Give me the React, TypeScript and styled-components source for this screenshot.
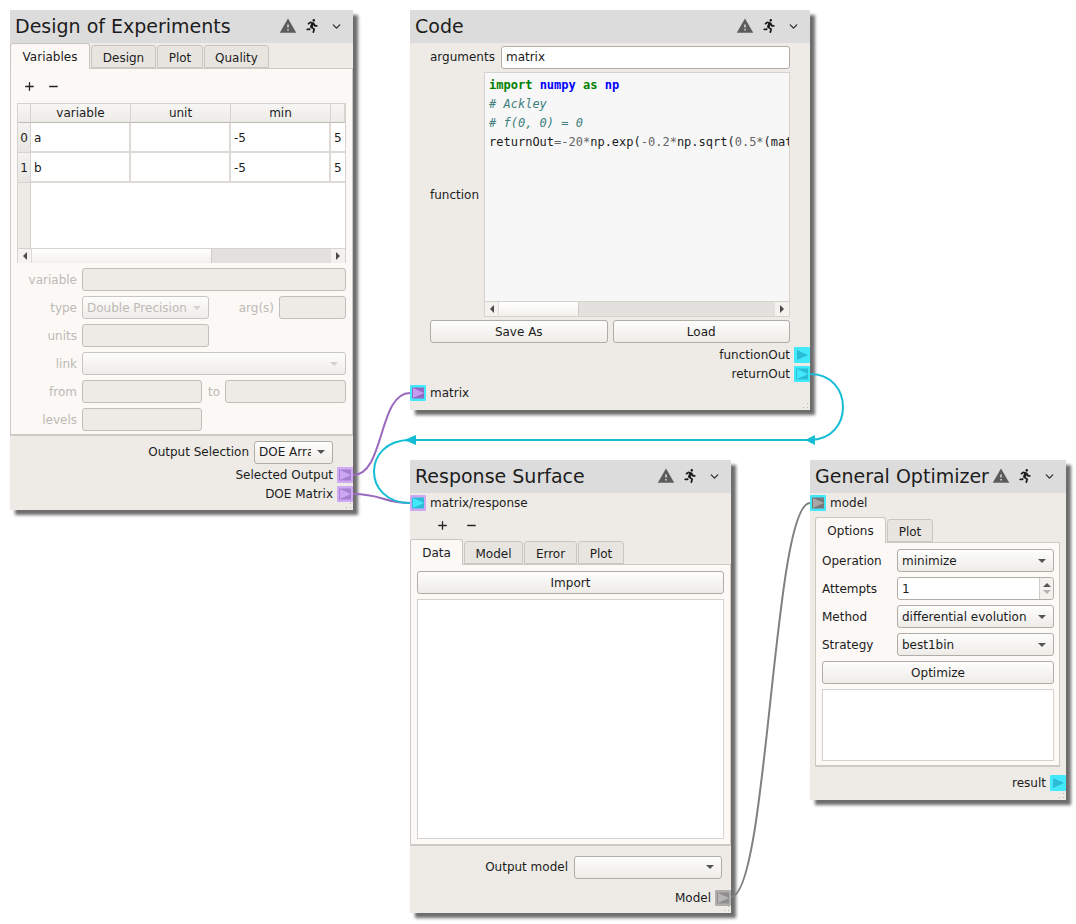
import React from "react";
import styled, { createGlobalStyle } from "styled-components";
import { FiChevronDown, FiPlus, FiMinus } from "react-icons/fi";
import { FaRunning } from "react-icons/fa";
import { MdWarning } from "react-icons/md";

const GlobalStyle = createGlobalStyle`
  html, body {
    margin: 0;
    padding: 0;
    background: #ffffff;
  }
  body {
    font-family: "DejaVu Sans", sans-serif;
    font-size: 12px;
    color: #1c1c1c;
  }
`;

const Canvas = styled.div`
  position: relative;
  width: 1076px;
  height: 924px;
  overflow: hidden;
`;

const Wires = styled.svg`
  position: absolute;
  inset: 0;
  z-index: 2;
  pointer-events: none;
`;

const Node = styled.section<{ $x: number; $y: number; $w: number; $h: number }>`
  position: absolute;
  left: ${(p) => p.$x}px;
  top: ${(p) => p.$y}px;
  width: ${(p) => p.$w}px;
  height: ${(p) => p.$h}px;
  display: flex;
  flex-direction: column;
  background: #eeebe7;
  box-shadow: 5px 5px 3px rgba(30, 30, 30, 0.65);
`;

const Header = styled.header`
  box-sizing: border-box;
  flex: 0 0 33px;
  display: flex;
  align-items: center;
  padding: 0 10px 1px 5px;
  background: #dcdcdc;
`;

const Title = styled.h1`
  flex: 1;
  margin: 0;
  font-size: 19px;
  font-weight: 400;
  white-space: nowrap;
`;

const HeaderIcons = styled.div`
  display: flex;
  align-items: center;
  gap: 10px;
  color: #5c5c5c;

  svg:nth-child(1) {
    margin-right: -2px;
  }
  svg:nth-child(2) {
    margin-right: 1px;
    color: #1c1c1c;
  }
  svg:nth-child(3) {
    color: #333333;
  }
`;

const Grip = styled.svg`
  position: absolute;
  right: 1px;
  bottom: 1px;
`;

const TabBar = styled.div<{ $inset?: number }>`
  flex: 0 0 25px;
  display: flex;
  align-items: flex-end;
  gap: 1px;
  margin-left: ${(p) => p.$inset ?? 0}px;
  position: relative;
  z-index: 1;
`;

const Tab = styled.div<{ $w: number; $active?: boolean }>`
  box-sizing: border-box;
  width: ${(p) => p.$w}px;
  height: ${(p) => (p.$active ? 26 : 23)}px;
  margin-bottom: ${(p) => (p.$active ? -1 : 0)}px;
  padding-top: ${(p) => (p.$active ? 6 : 5)}px;
  text-align: center;
  background: ${(p) => (p.$active ? "#fbf8f5" : "#e8e5e1")};
  border: 1px solid #c9c5c0;
  border-bottom: ${(p) => (p.$active ? "none" : "1px solid #c9c5c0")};
  border-radius: 3px 3px 0 0;
`;

const Pane = styled.div<{ $h: number; $margin?: string; $pad?: string }>`
  box-sizing: border-box;
  flex: 0 0 ${(p) => p.$h}px;
  margin: ${(p) => p.$margin ?? "0"};
  padding: ${(p) => p.$pad ?? "0"};
  background: #fbf8f5;
  border: 1px solid #cdc9c4;
  border-bottom-width: 2px;
  display: flex;
  flex-direction: column;
`;

const ToolRow = styled.div<{ $pad: number; $h: number; $gap: number }>`
  flex: 0 0 ${(p) => p.$h}px;
  display: flex;
  align-items: center;
  gap: ${(p) => p.$gap}px;
  padding-left: ${(p) => p.$pad}px;
  color: #262626;
`;

const VarTable = styled.div`
  box-sizing: border-box;
  width: 329px;
  height: 160px;
  display: grid;
  grid-template-columns: 13px 100px 100px 100px 1fr;
  grid-template-rows: 19px 30px 30px 1fr 14px;
  background: #ffffff;
  border: 1px solid #d6d3ce;
`;

const HeadCell = styled.div`
  display: flex;
  align-items: center;
  justify-content: center;
  background: linear-gradient(#f7f6f4, #ecebe7);
  border-right: 1px solid #d6d3ce;
  border-bottom: 1px solid #bdb9b4;
`;

const RowHead = styled(HeadCell)`
  padding-top: 1px;
  border-bottom: 1px solid #d6d3ce;
  background: linear-gradient(#f4f2f0, #e8e6e2);
`;

const Cell = styled.div<{ $last?: boolean }>`
  display: flex;
  align-items: center;
  padding: 2px 0 0 3px;
  overflow: hidden;
  background: #ffffff;
  border-right: ${(p) => (p.$last ? "none" : "2px solid #dedbd7")};
  border-bottom: 2px solid #dedbd7;
`;

const EmptyGutter = styled.div`
  background: #eeebe7;
  border-right: 1px solid #d6d3ce;
`;

const EmptyBody = styled.div`
  grid-column: 2 / 6;
`;

const ScrollBar = styled.div<{ $thumb: number }>`
  display: grid;
  grid-template-columns: 13px ${(p) => p.$thumb}px 1fr 14px;
  height: 14px;
  background: #e3e1dd;
  border-top: 1px solid #d6d3ce;
`;

const ScrollArrow = styled.div<{ $dir: "left" | "right" }>`
  display: flex;
  align-items: center;
  justify-content: center;
  background: #f4f2ef;

  &::before {
    content: "";
    border-top: 4px solid transparent;
    border-bottom: 4px solid transparent;
    ${(p) => (p.$dir === "left" ? "border-right" : "border-left")}: 4px solid #4a4a4a;
  }
`;

const ScrollThumb = styled.div`
  background: linear-gradient(#ffffff, #f2f0ed);
  border-right: 1px solid #cfccc7;
  border-left: 1px solid #e0ddd9;
`;

const ScrollTrough = styled.div``;

const TableScroll = styled(ScrollBar)`
  grid-column: 1 / 6;
`;

const FormRow = styled.div`
  flex: 0 0 23px;
  display: flex;
  align-items: center;
  margin-top: 5px;
`;

const FormLabel = styled.span<{ $w: number; $muted?: boolean }>`
  flex: 0 0 ${(p) => p.$w}px;
  text-align: right;
  margin-right: 5px;
  color: ${(p) => (p.$muted ? "#bdbab6" : "inherit")};
  white-space: nowrap;
`;

const Field = styled.div<{ $w?: number; $white?: boolean }>`
  box-sizing: border-box;
  ${(p) => (p.$w ? `flex: 0 0 ${p.$w}px;` : "flex: 1;")}
  height: 23px;
  display: flex;
  align-items: center;
  padding-left: 4px;
  background: ${(p) => (p.$white ? "#ffffff" : "#eeebe7")};
  border: 1px solid ${(p) => (p.$white ? "#b0aca6" : "#c2beb9")};
  border-radius: 3px;
`;

const Combo = styled.div<{ $w?: number; $off?: boolean }>`
  box-sizing: border-box;
  ${(p) => (p.$w ? `flex: 0 0 ${p.$w}px;` : "flex: 1;")}
  min-width: 0;
  height: 23px;
  display: flex;
  align-items: center;
  padding: 0 7px 0 4px;
  color: ${(p) => (p.$off ? "#bdbab6" : "inherit")};
  background: linear-gradient(#fdfdfc, #eeece8);
  border: 1px solid ${(p) => (p.$off ? "#c9c5c0" : "#b0aca6")};
  border-radius: 3px;

  &::after {
    content: "";
    flex: none;
    margin-left: auto;
    border-left: 4px solid transparent;
    border-right: 4px solid transparent;
    border-top: 4px solid ${(p) => (p.$off ? "#d4d1cd" : "#555555")};
  }
`;

const ComboText = styled.span`
  flex: 1;
  min-width: 0;
  margin-right: 6px;
  overflow: hidden;
  white-space: nowrap;
`;

const Spin = styled.div`
  flex: 0 0 13px;
  height: 100%;
  margin-left: auto;
  display: flex;
  flex-direction: column;
  align-items: center;
  justify-content: center;
  gap: 3px;
  background: #f3f1ee;
  border-left: 1px solid #d0cdc8;
  border-radius: 0 3px 3px 0;
`;

const SpinArrow = styled.span<{ $down?: boolean }>`
  border-left: 4px solid transparent;
  border-right: 4px solid transparent;
  ${(p) =>
    p.$down
      ? "border-top: 4px solid #b5b2ae;"
      : "border-bottom: 4px solid #555555;"}
`;

const Button = styled.div<{ $fixed?: boolean }>`
  box-sizing: border-box;
  flex: ${(p) => (p.$fixed ? "0 0 23px" : "1")};
  height: 23px;
  display: flex;
  align-items: center;
  justify-content: center;
  background: linear-gradient(#fdfdfc, #eeece8);
  border: 1px solid #b0aca6;
  border-radius: 3px;
`;

const BlankBox = styled.div<{ $h: number }>`
  box-sizing: border-box;
  flex: 0 0 ${(p) => p.$h}px;
  background: #ffffff;
  border: 1px solid #d6d3ce;
`;

const PortRow = styled.div<{ $out?: boolean }>`
  flex: 0 0 19px;
  display: flex;
  align-items: center;
  justify-content: ${(p) => (p.$out ? "flex-end" : "flex-start")};
  gap: 4px;
`;

const ActionRow = styled.div<{ $pad: string; $h: number; $end?: boolean; $gap?: number }>`
  box-sizing: border-box;
  flex: 0 0 ${(p) => p.$h}px;
  display: flex;
  align-items: center;
  justify-content: ${(p) => (p.$end ? "flex-end" : "flex-start")};
  gap: ${(p) => p.$gap ?? 5}px;
  padding: ${(p) => p.$pad};
`;

const Footer = styled.div`
  flex: 1;
  display: flex;
  flex-direction: column;
`;

const Spacer = styled.div<{ $h: number }>`
  flex: 0 0 ${(p) => p.$h}px;
`;

const Editor = styled.div`
  flex: 1;
  box-sizing: border-box;
  display: flex;
  flex-direction: column;
  min-width: 0;
  height: 245px;
  background: #f7f7f7;
  border: 1px solid #d6d3ce;
`;

const EditorBody = styled.pre`
  flex: 1;
  margin: 0;
  padding: 3px 0 0 4px;
  overflow: hidden;
  font-family: "DejaVu Sans Mono", monospace;
  font-size: 12px;
  line-height: 19px;
`;

const Kw = styled.b<{ $tone: "green" | "blue" }>`
  color: ${(p) => (p.$tone === "green" ? "#008000" : "#0000ff")};
`;

const Comment = styled.i`
  color: #408080;
`;

const Op = styled.span`
  color: #666666;
`;

const OptionLabel = styled.span`
  flex: 0 0 70px;
  margin-right: 5px;
`;

const OptionRow = styled.div`
  flex: 0 0 23px;
  display: flex;
  align-items: center;
  margin-bottom: 5px;
`;

type PortTone = { glow: string; box?: string; tri: string };

const TONES: Record<string, PortTone> = {
  cyanOpen: { glow: "#42e9fb", tri: "#2bbcd8" },
  cyanLinked: { glow: "#42e9fb", box: "#2bbcd8", tri: "#42e9fb" },
  purpleIn: { glow: "#42e9fb", box: "#9468c4", tri: "#c79cf0" },
  purpleOut: { glow: "#cfa9f3", box: "#a57fd0", tri: "#cda6f2" },
  cyanIn: { glow: "#cfa9f3", box: "#2bbcd8", tri: "#42e9fb" },
  greyIn: { glow: "#42e9fb", box: "#777777", tri: "#a8a8a8" },
  greyOut: { glow: "#b0aeab", box: "#8e8e8e", tri: "#b5b5b5" },
};

function Port({ tone }: { tone: keyof typeof TONES }) {
  const t = TONES[tone];
  return (
    <svg width="16" height="16" viewBox="0 0 16 16">
      <rect width="16" height="16" rx="1" fill={t.glow} />
      {t.box && <rect x="2" y="2.5" width="12" height="11" fill={t.box} />}
      <polygon points="3,3 14,8 3,13" fill={t.tri} />
    </svg>
  );
}

function NodeHeader({ title }: { title: string }) {
  return (
    <Header>
      <Title>{title}</Title>
      <HeaderIcons>
        <MdWarning size={18} />
        <FaRunning size={14} />
        <FiChevronDown size={13} strokeWidth={2.5} />
      </HeaderIcons>
    </Header>
  );
}

function ResizeGrip() {
  return (
    <Grip width="6" height="6" viewBox="0 0 6 6">
      <rect x="4" y="0" width="1" height="1" fill="#b5b2ad" />
      <rect x="0" y="4" width="1" height="1" fill="#b5b2ad" />
      <rect x="4" y="4" width="1" height="1" fill="#b5b2ad" />
    </Grip>
  );
}

function PlusMinus() {
  return (
    <>
      <FiPlus size={13} strokeWidth={2.4} />
      <FiMinus size={13} strokeWidth={2.4} />
    </>
  );
}

function DesignOfExperiments() {
  return (
    <Node $x={10} $y={10} $w={343} $h={500}>
      <NodeHeader title="Design of Experiments" />
      <TabBar>
        <Tab $w={80} $active>Variables</Tab>
        <Tab $w={65}>Design</Tab>
        <Tab $w={46}>Plot</Tab>
        <Tab $w={65}>Quality</Tab>
      </TabBar>
      <Pane $h={368} $pad="0 6px 0 6px">
        <ToolRow $pad={6} $h={34} $gap={11}>
          <PlusMinus />
        </ToolRow>
        <VarTable>
          <HeadCell />
          <HeadCell>variable</HeadCell>
          <HeadCell>unit</HeadCell>
          <HeadCell>min</HeadCell>
          <HeadCell />
          <RowHead>0</RowHead>
          <Cell>a</Cell>
          <Cell />
          <Cell>-5</Cell>
          <Cell $last>5</Cell>
          <RowHead>1</RowHead>
          <Cell>b</Cell>
          <Cell />
          <Cell>-5</Cell>
          <Cell $last>5</Cell>
          <EmptyGutter />
          <EmptyBody />
          <TableScroll $thumb={181}>
            <ScrollArrow $dir="left" />
            <ScrollThumb />
            <ScrollTrough />
            <ScrollArrow $dir="right" />
          </TableScroll>
        </VarTable>
        <FormRow>
          <FormLabel $w={60} $muted>variable</FormLabel>
          <Field />
        </FormRow>
        <FormRow>
          <FormLabel $w={60} $muted>type</FormLabel>
          <Combo $w={127} $off>
            <ComboText>Double Precision</ComboText>
          </Combo>
          <FormLabel $w={65} $muted>arg(s)</FormLabel>
          <Field />
        </FormRow>
        <FormRow>
          <FormLabel $w={60} $muted>units</FormLabel>
          <Field $w={127} />
        </FormRow>
        <FormRow>
          <FormLabel $w={60} $muted>link</FormLabel>
          <Combo $off />
        </FormRow>
        <FormRow>
          <FormLabel $w={60} $muted>from</FormLabel>
          <Field $w={120} />
          <FormLabel $w={18} $muted>to</FormLabel>
          <Field />
        </FormRow>
        <FormRow>
          <FormLabel $w={60} $muted>levels</FormLabel>
          <Field $w={120} />
        </FormRow>
      </Pane>
      <Footer>
        <ActionRow $pad="3px 20px 0 0" $h={29} $end>
          <span>Output Selection</span>
          <Combo $w={79}>
            <ComboText>DOE Array</ComboText>
          </Combo>
        </ActionRow>
        <PortRow $out>
          <span>Selected Output</span>
          <Port tone="purpleOut" />
        </PortRow>
        <PortRow $out>
          <span>DOE Matrix</span>
          <Port tone="purpleOut" />
        </PortRow>
      </Footer>
      <ResizeGrip />
    </Node>
  );
}

function CodeNode() {
  return (
    <Node $x={410} $y={10} $w={400} $h={400}>
      <NodeHeader title="Code" />
      <ActionRow $pad="0 20px 0 20px" $h={28} $gap={6}>
        <span>arguments</span>
        <Field $white>matrix</Field>
      </ActionRow>
      <ActionRow $pad="0 20px 0 20px" $h={247}>
        <span>function</span>
        <Editor>
          <EditorBody>
            <Kw $tone="green">import</Kw> <Kw $tone="blue">numpy</Kw> <Kw $tone="green">as</Kw> <Kw $tone="blue">np</Kw>
            {"\n"}
            <Comment># Ackley</Comment>
            {"\n"}
            <Comment># f(0, 0) = 0</Comment>
            {"\n"}
            returnOut<Op>=-20*</Op>np.exp(<Op>-0.2*</Op>np.sqrt(<Op>0.5*</Op>(matrix
          </EditorBody>
          <ScrollBar $thumb={81}>
            <ScrollArrow $dir="left" />
            <ScrollThumb />
            <ScrollTrough />
            <ScrollArrow $dir="right" />
          </ScrollBar>
        </Editor>
      </ActionRow>
      <ActionRow $pad="0 20px 0 20px" $h={27}>
        <Button>Save As</Button>
        <Button>Load</Button>
      </ActionRow>
      <PortRow $out>
        <span>functionOut</span>
        <Port tone="cyanOpen" />
      </PortRow>
      <PortRow $out>
        <span>returnOut</span>
        <Port tone="cyanLinked" />
      </PortRow>
      <PortRow>
        <Port tone="purpleIn" />
        <span>matrix</span>
      </PortRow>
      <ResizeGrip />
    </Node>
  );
}

function ResponseSurface() {
  return (
    <Node $x={410} $y={460} $w={321} $h={453}>
      <NodeHeader title="Response Surface" />
      <PortRow>
        <Port tone="cyanIn" />
        <span>matrix/response</span>
      </PortRow>
      <ToolRow $pad={26} $h={27} $gap={16}>
        <PlusMinus />
      </ToolRow>
      <TabBar>
        <Tab $w={53} $active>Data</Tab>
        <Tab $w={59}>Model</Tab>
        <Tab $w={53}>Error</Tab>
        <Tab $w={46}>Plot</Tab>
      </TabBar>
      <Pane $h={281} $pad="6px 6px 5px 6px">
        <Button $fixed>Import</Button>
        <Spacer $h={5} />
        <BlankBox $h={240} />
      </Pane>
      <Footer>
        <ActionRow $pad="0 9px 0 0" $h={42} $end $gap={6}>
          <span>Output model</span>
          <Combo $w={148} />
        </ActionRow>
        <PortRow $out>
          <span>Model</span>
          <Port tone="greyOut" />
        </PortRow>
      </Footer>
      <ResizeGrip />
    </Node>
  );
}

function GeneralOptimizer() {
  return (
    <Node $x={810} $y={460} $w={256} $h={340}>
      <NodeHeader title="General Optimizer" />
      <PortRow>
        <Port tone="greyIn" />
        <span>model</span>
      </PortRow>
      <Spacer $h={5} />
      <TabBar $inset={5}>
        <Tab $w={71} $active>Options</Tab>
        <Tab $w={46}>Plot</Tab>
      </TabBar>
      <Pane $h={225} $margin="0 6px 0 5px" $pad="6px 5px 4px 6px">
        <OptionRow>
          <OptionLabel>Operation</OptionLabel>
          <Combo>
            <ComboText>minimize</ComboText>
          </Combo>
        </OptionRow>
        <OptionRow>
          <OptionLabel>Attempts</OptionLabel>
          <Field $white>
            1
            <Spin>
              <SpinArrow />
              <SpinArrow $down />
            </Spin>
          </Field>
        </OptionRow>
        <OptionRow>
          <OptionLabel>Method</OptionLabel>
          <Combo>
            <ComboText>differential evolution</ComboText>
          </Combo>
        </OptionRow>
        <OptionRow>
          <OptionLabel>Strategy</OptionLabel>
          <Combo>
            <ComboText>best1bin</ComboText>
          </Combo>
        </OptionRow>
        <Button $fixed>Optimize</Button>
        <Spacer $h={5} />
        <BlankBox $h={72} />
      </Pane>
      <Spacer $h={6} />
      <PortRow $out>
        <span>result</span>
        <Port tone="cyanOpen" />
      </PortRow>
      <ResizeGrip />
    </Node>
  );
}

export default function App() {
  return (
    <Canvas>
      <GlobalStyle />
      <DesignOfExperiments />
      <CodeNode />
      <ResponseSurface />
      <GeneralOptimizer />
      <Wires width="1076" height="924" viewBox="0 0 1076 924" fill="none">
        <path d="M353 475 C385 475 378 393 410 393" stroke="#9a68bf" strokeWidth="2" />
        <path d="M353 494 C382 494 384 503 410 503" stroke="#9a68bf" strokeWidth="2" />
        <path d="M731 897 C768 897 773 503 810 503" stroke="#808080" strokeWidth="2" />
        <path d="M810 374 C854 374 854 440 810 440 L410 440 C362 440 362 503 410 503" stroke="#14bcd4" strokeWidth="2" />
        <polygon points="805,440 815,435 815,445" fill="#14bcd4" />
        <polygon points="404,440 416,435 416,445" fill="#14bcd4" />
      </Wires>
    </Canvas>
  );
}
